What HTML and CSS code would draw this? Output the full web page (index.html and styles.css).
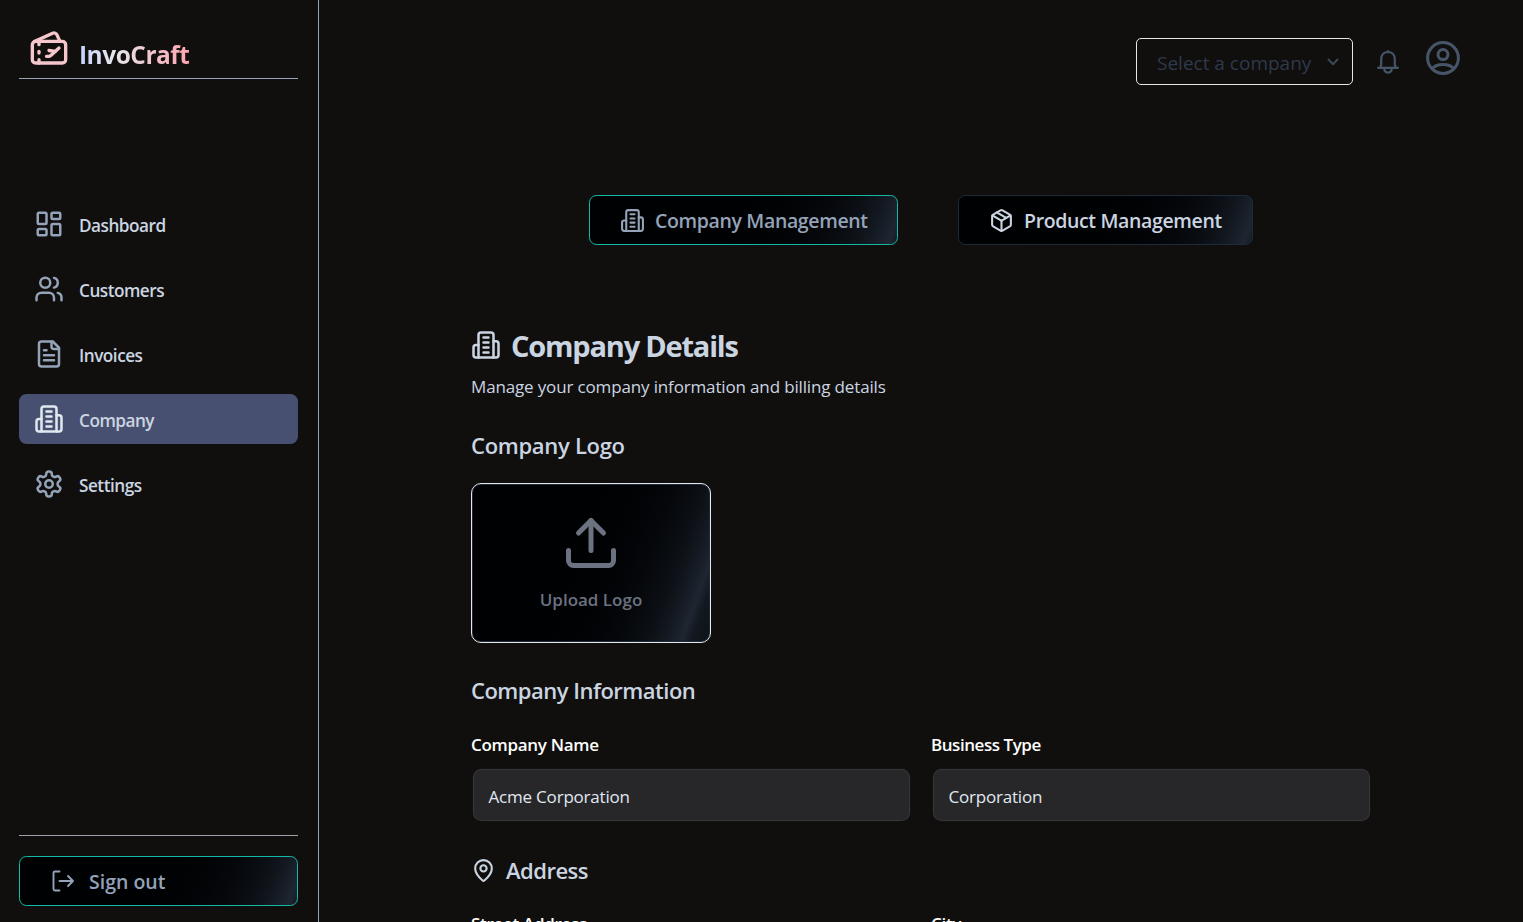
FILE: index.html
```html
<!DOCTYPE html>
<html lang="en">
<head>
<meta charset="utf-8">
<title>InvoCraft</title>
<link rel="stylesheet" href="styles.css">
</head>
<body>
<svg class="defs" width="0" height="0">
  <symbol id="building" viewBox="0 0 24 24"><path d="M6 22V4a2 2 0 0 1 2-2h8a2 2 0 0 1 2 2v18Z"/><path d="M6 12H4a2 2 0 0 0-2 2v6a2 2 0 0 0 2 2h2"/><path d="M18 9h2a2 2 0 0 1 2 2v9a2 2 0 0 1-2 2h-2"/><path d="M10 6h4M10 10h4M10 14h4M10 18h4"/></symbol>
</svg>
<div class="app">
  <aside class="sidebar">
    <div class="brand">
      <svg class="icon brand-icon" viewBox="0 0 24 24"><path d="M10.5 17h1.227a2 2 0 0 0 1.345-.52L18 12"/><path d="m12 13.5 3.794.506"/><path d="m3.173 8.18 11-5a2 2 0 0 1 2.647.993L18.56 8"/><path d="M6 10V8M6 14v1M6 19v2"/><rect x="2" y="8" width="20" height="13" rx="2"/></svg>
      <span class="brand-name">InvoCraft</span>
    </div>
    <nav class="nav">
      <a class="nav-item"><svg class="icon nav-icon" viewBox="0 0 24 24"><rect x="3" y="3" width="7" height="9" rx="1"/><rect x="14" y="3" width="7" height="5" rx="1"/><rect x="14" y="12" width="7" height="9" rx="1"/><rect x="3" y="16" width="7" height="5" rx="1"/></svg><span class="nav-label">Dashboard</span></a>
      <a class="nav-item"><svg class="icon nav-icon" viewBox="0 0 24 24"><path d="M16 21v-2a4 4 0 0 0-4-4H6a4 4 0 0 0-4 4v2"/><circle cx="9" cy="7" r="4"/><path d="M22 21v-2a4 4 0 0 0-3-3.87"/><path d="M16 3.13a4 4 0 0 1 0 7.75"/></svg><span class="nav-label">Customers</span></a>
      <a class="nav-item"><svg class="icon nav-icon" viewBox="0 0 24 24"><path d="M15 2H6a2 2 0 0 0-2 2v16a2 2 0 0 0 2 2h12a2 2 0 0 0 2-2V7Z"/><path d="M14 2v4a2 2 0 0 0 2 2h4"/><path d="M10 9H8M16 13H8M16 17H8"/></svg><span class="nav-label">Invoices</span></a>
      <a class="nav-item active"><svg class="icon nav-icon"><use href="#building"/></svg><span class="nav-label">Company</span></a>
      <a class="nav-item"><svg class="icon nav-icon" viewBox="0 0 24 24"><path d="M12.22 2h-.44a2 2 0 0 0-2 2v.18a2 2 0 0 1-1 1.73l-.43.25a2 2 0 0 1-2 0l-.15-.08a2 2 0 0 0-2.73.73l-.22.38a2 2 0 0 0 .73 2.73l.15.1a2 2 0 0 1 1 1.72v.51a2 2 0 0 1-1 1.74l-.15.09a2 2 0 0 0-.73 2.73l.22.38a2 2 0 0 0 2.73.73l.15-.08a2 2 0 0 1 2 0l.43.25a2 2 0 0 1 1 1.73V20a2 2 0 0 0 2 2h.44a2 2 0 0 0 2-2v-.18a2 2 0 0 1 1-1.73l.43-.25a2 2 0 0 1 2 0l.15.08a2 2 0 0 0 2.73-.73l.22-.39a2 2 0 0 0-.73-2.73l-.15-.08a2 2 0 0 1-1-1.74v-.5a2 2 0 0 1 1-1.74l.15-.09a2 2 0 0 0 .73-2.73l-.22-.38a2 2 0 0 0-2.73-.73l-.15.08a2 2 0 0 1-2 0l-.43-.25a2 2 0 0 1-1-1.73V4a2 2 0 0 0-2-2z"/><circle cx="12" cy="12" r="3"/></svg><span class="nav-label">Settings</span></a>
    </nav>
    <div class="sidebar-foot">
      <button class="shimmer signout"><svg class="icon signout-icon" viewBox="0 0 24 24"><path d="M8.5 21.5H4A1.5 1.5 0 0 1 2.5 20V4A1.5 1.5 0 0 1 4 2.500h4.500"/><path d="M8.500 12H22M17 7l5 5-5 5"/></svg><span>Sign out</span></button>
    </div>
  </aside>
  <main class="main">
    <header class="topbar">
      <div class="select"><span class="select-text">Select a company</span><svg class="icon chevron" viewBox="0 0 12 8"><path d="m1.500 1.500 4.500 4.700 4.500-4.700"/></svg></div>
      <svg class="icon bell" viewBox="0 0 24 26"><path d="M2.100 18.800h19.800M4 18.600l1.200-2.600V10.200C5.200 6 7.800 3 12 3s6.800 3 6.800 7.200V16l1.200 2.600M12 2.800V2M8.300 19.300c0 3 1.600 4.300 3.700 4.300s3.700-1.300 3.700-4.300"/></svg>
      <svg class="icon avatar" viewBox="0 0 34 34"><circle cx="17" cy="17" r="15.4"/><circle cx="17" cy="13.600" r="5"/><path d="M6.200 27.400c2.400-2.600 6.400-4 10.800-4s8.400 1.400 10.800 4"/></svg>
    </header>
    <div class="tabs">
      <button class="shimmer tab tab-company"><svg class="icon tab-icon"><use href="#building"/></svg><span>Company Management</span></button>
      <button class="shimmer tab tab-product"><svg class="icon tab-icon" viewBox="0 0 24 24"><path d="M11 21.73a2 2 0 0 0 2 0l7-4A2 2 0 0 0 21 16V8a2 2 0 0 0-1-1.73l-7-4a2 2 0 0 0-2 0l-7 4A2 2 0 0 0 3 8v8a2 2 0 0 0 1 1.73z"/><path d="M12 22V12"/><path d="m3.3 7 7.703 4.734a2 2 0 0 0 1.994 0L20.7 7"/><path d="m7.5 4.27 9 5.15"/></svg><span>Product Management</span></button>
    </div>
    <section class="content">
      <h1 class="title"><svg class="icon title-icon"><use href="#building"/></svg><span>Company Details</span></h1>
      <p class="subtitle">Manage your company information and billing details</p>
      <h2 class="heading heading-logo">Company Logo</h2>
      <div class="shimmer upload">
        <svg class="icon upload-icon" viewBox="0 0 24 24"><path d="M21 15v4a2 2 0 0 1-2 2H5a2 2 0 0 1-2-2v-4"/><path d="m17 8-5-5-5 5"/><path d="M12 3v12"/></svg>
        <span class="upload-text">Upload Logo</span>
      </div>
      <h2 class="heading heading-info">Company Information</h2>
      <div class="grid">
        <div class="field"><label class="label">Company Name</label><div class="input">Acme Corporation</div></div>
        <div class="field"><label class="label label-type">Business Type</label><div class="input">Corporation</div></div>
      </div>
      <h2 class="heading heading-address"><svg class="icon pin" viewBox="0 0 24 24"><path d="M20 10c0 4.993-5.539 10.193-7.399 11.799a1 1 0 0 1-1.202 0C9.539 20.193 4 14.993 4 10a8 8 0 0 1 16 0"/><circle cx="12" cy="10" r="3"/></svg><span>Address</span></h2>
      <div class="grid grid-address">
        <div class="field"><label class="label">Street Address</label></div>
        <div class="field"><label class="label">City</label></div>
      </div>
    </section>
  </main>
</div>
</body>
</html>
```
FILE: styles.css
```css
* { box-sizing: border-box; }
body {
  margin: 0;
  background: #100f0d;
  color: #cbd5e1;
  font-family: "Open Sans", "Noto Sans", sans-serif;
  overflow: hidden;
}
h1, h2, p { margin: 0; }
.defs { display: none; }
.app { display: flex; height: 922px; overflow: hidden; }
.icon {
  flex: none;
  display: block;
  fill: none;
  stroke: currentColor;
  stroke-width: 2;
  stroke-linecap: round;
  stroke-linejoin: round;
}
.shimmer {
  background: linear-gradient(110deg, #000103, 45%, #1e2631, 55%, #000103) 0 0 / 200% 100%;
  font-family: inherit;
  font-weight: 600;
  white-space: nowrap;
}

/* Sidebar */
.sidebar {
  flex: none;
  width: 319px;
  padding: 0 20px 16px 19px;
  border-right: 1px solid #94a3b8;
  display: flex;
  flex-direction: column;
}
.brand {
  display: flex;
  height: 79px;
  padding: 28px 0 0 10px;
  gap: 10px;
  border-bottom: 1px solid #94a3b8;
}
.brand-icon { width: 40px; height: 40px; color: #f5c6cb; }
.brand-name {
  height: 36px;
  margin-top: 9px;
  font-size: 24.5px;
  line-height: 36px;
  font-weight: 700;
  letter-spacing: -0.5px;
  background: linear-gradient(90deg, #c7d2fe, #e5e7eb 32%, #fda4af);
  -webkit-background-clip: text;
  background-clip: text;
  color: transparent;
}
.nav { display: flex; flex-direction: column; gap: 15px; margin-top: 120px; }
.nav-item {
  display: flex;
  align-items: center;
  gap: 15px;
  height: 50px;
  padding-left: 15px;
  border-radius: 7.5px;
}
.nav-icon { width: 30px; height: 30px; color: #94a3b8; }
.nav-label {
  padding-top: 2px;
  font-size: 17.2px;
  font-weight: 600;
  letter-spacing: -0.5px;
}
.active { background: #475070; }
.active .nav-icon { color: #e2e8f0; }
.sidebar-foot {
  margin-top: auto;
  padding-top: 20px;
  border-top: 1px solid #a1a1aa;
}
.signout {
  display: flex;
  align-items: center;
  gap: 15px;
  width: 279px;
  height: 50px;
  padding: 0 0 0 31px;
  border: 1px solid #14b8a6;
  border-radius: 7.5px;
  color: #94a3b8;
  font-size: 19.5px;
  letter-spacing: 0;
}
.signout-icon { width: 24px; height: 24px; margin-right: -1px; stroke-width: 1.9; }
.signout span { padding-top: 1px; }

/* Main column */
.main { flex: 1; min-width: 0; }
.topbar {
  display: flex;
  justify-content: flex-end;
  height: 195px;
  padding: 38px 63px 0 0;
}
.select {
  display: flex;
  align-items: center;
  justify-content: space-between;
  width: 217px;
  height: 47px;
  padding: 2px 13px 0 20px;
  border: 1px solid #e5e7eb;
  border-radius: 5px;
  color: #2e394b;
  white-space: nowrap;
}
.select-text { font-size: 19px; }
.chevron { width: 12px; height: 8px; margin-top: -2px; color: #3b4859; }
.bell {
  width: 24px;
  height: 26px;
  margin: 11px 26px 0 23px;
  color: #475569;
  stroke-width: 2.2;
}
.avatar { width: 34px; height: 34px; margin-top: 3px; color: #475569; stroke-width: 3; }
.tabs { display: flex; justify-content: center; gap: 60px; }
.tab {
  display: flex;
  align-items: center;
  gap: 10px;
  height: 50px;
  padding: 0 0 0 30px;
  border: 1px solid #1e293b;
  border-radius: 7.5px;
  color: #cbd5e1;
  font-size: 19.5px;
  letter-spacing: -0.36px;
}
.tab-icon { width: 25px; height: 25px; }
.tab-company { width: 309px; border-color: #14b8a6; color: #94a3b8; }
.tab-product { width: 295px; }

.content { width: 900px; margin: 82px auto 0; }
.title {
  display: flex;
  align-items: center;
  gap: 10px;
  height: 38px;
  font-size: 29px;
  font-weight: 700;
  line-height: 38px;
  letter-spacing: -1.2px;
}
.title-icon { width: 30px; height: 30px; margin-top: -2px; }
.subtitle {
  height: 25px;
  margin-top: 9px;
  font-size: 17px;
  line-height: 25px;
  letter-spacing: -0.15px;
}
.heading {
  height: 35px;
  font-size: 22px;
  line-height: 35px;
  font-weight: 600;
  letter-spacing: -0.5px;
}
.heading-logo { margin-top: 29px; letter-spacing: -0.3px; }
.upload {
  display: flex;
  flex-direction: column;
  align-items: center;
  width: 240px;
  height: 160px;
  margin-top: 20px;
  padding-top: 29px;
  border: 1px solid #e5e7eb;
  border-radius: 10px;
  box-shadow: inset 0 0 0 1px #1e293b;
  color: #6b7280;
}
.upload-icon { width: 60px; height: 60px; }
.upload-text {
  margin-top: 14px;
  font-size: 17px;
  line-height: 25px;
  letter-spacing: 0;
}
.heading-info { margin-top: 30px; }
.grid { display: grid; grid-template-columns: 1fr 1fr; gap: 20px; margin-top: 24px; }
.grid-address { margin-top: 23px; }
.label {
  display: block;
  height: 25px;
  color: #fff;
  font-size: 17px;
  line-height: 25px;
  font-weight: 600;
  letter-spacing: -0.3px;
}
.label-type { letter-spacing: -0.45px; }
.input {
  height: 50px;
  margin: 13px 2.5px 0;
  padding-left: 15px;
  border-radius: 7.5px;
  background: #27272a;
  box-shadow: 0 0 1px 1px #3b3b3c;
  color: #e2e8f0;
  font-size: 17px;
  line-height: 53px;
  letter-spacing: -0.2px;
}
.heading-address { display: flex; align-items: center; gap: 10px; margin-top: 33px; }
.pin { width: 25px; height: 25px; }
```
